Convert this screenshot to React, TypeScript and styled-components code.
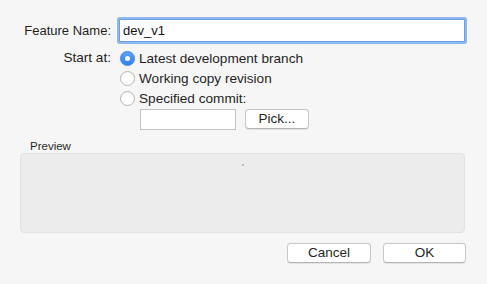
import React from 'react';
import styled, { createGlobalStyle } from 'styled-components';

const GlobalStyle = createGlobalStyle`
  html, body {
    margin: 0;
    padding: 0;
    background: #f6f6f6;
  }
  * {
    box-sizing: border-box;
  }
`;

const options = [
  { id: 'latest', label: 'Latest development branch', checked: true },
  { id: 'working', label: 'Working copy revision', checked: false },
  { id: 'commit', label: 'Specified commit:', checked: false },
];

export default function App() {
  return (
    <>
      <GlobalStyle />
      <Dialog>
        <NameRow>
          <Label>Feature Name:</Label>
          <NameInput defaultValue="dev_v1" />
        </NameRow>

        <StartRow>
          <Label $size={13.6}>Start at:</Label>
          <Options>
            {options.map((opt) => (
              <Option key={opt.id}>
                <Radio $checked={opt.checked} />
                <span>{opt.label}</span>
              </Option>
            ))}
          </Options>
        </StartRow>

        <CommitRow>
          <CommitInput />
          <Button $width={64} $height={20}>Pick...</Button>
        </CommitRow>

        <PreviewLabel>Preview</PreviewLabel>
        <PreviewBox>
          <Dot />
        </PreviewBox>

        <Footer>
          <Button $width={84} $height={20}>Cancel</Button>
          <Button $width={83} $height={20}>OK</Button>
        </Footer>
      </Dialog>
    </>
  );
}

const Dialog = styled.div`
  width: 487px;
  height: 284px;
  padding: 17px 21px 0 20px;
  background: #f6f6f6;
  font-family: "Liberation Sans", Arial, sans-serif;
  font-size: 13px;
  color: #1f1f1f;
  display: flex;
  flex-direction: column;
`;

const Label = styled.div<{ $size?: number }>`
  width: 91px;
  flex: none;
  text-align: right;
  line-height: 20px;
  font-size: ${(p) => p.$size ?? 13}px;
`;

const NameRow = styled.div`
  display: flex;
  align-items: center;
  height: 27px;
`;

const NameInput = styled.input`
  margin-left: 8px;
  width: 346px;
  height: 23px;
  border: 1px solid #6b9fe6;
  border-radius: 1px;
  box-shadow: 0 0 0 2px #8fb8f1;
  outline: none;
  padding: 0 3px;
  font-family: "Liberation Sans", Arial, sans-serif;
  font-size: 13px;
  color: #111;
  background: #fff;
`;

const StartRow = styled.div`
  display: flex;
  align-items: flex-start;
  margin-top: 4px;
`;

const Options = styled.div`
  margin-left: 9px;
  display: flex;
  flex-direction: column;
  font-size: 13.6px;
`;

const Option = styled.label`
  display: flex;
  align-items: center;
  gap: 4px;
  height: 20px;
`;

const Radio = styled.span<{ $checked: boolean }>`
  width: 15px;
  height: 15px;
  border-radius: 50%;
  flex: none;
  position: relative;
  background: ${(p) => (p.$checked ? 'linear-gradient(#5aa2fb, #2f7ff3)' : '#fff')};
  border: 1px solid ${(p) => (p.$checked ? '#3b82ee' : '#b5b5b5')};
  box-shadow: ${(p) => (p.$checked ? 'none' : 'inset 0 1px 1px rgba(0,0,0,0.05)')};

  &::after {
    content: '';
    display: ${(p) => (p.$checked ? 'block' : 'none')};
    position: absolute;
    left: 50%;
    top: 50%;
    width: 5px;
    height: 5px;
    margin: -2.5px 0 0 -2.5px;
    border-radius: 50%;
    background: #fff;
  }
`;

const CommitRow = styled.div`
  display: flex;
  align-items: flex-start;
  gap: 9px;
  margin-top: 1px;
  margin-left: 120px;
`;

const CommitInput = styled.input`
  width: 96px;
  height: 21px;
  border: 1px solid #c3c3c3;
  border-radius: 0;
  background: #fff;
  outline: none;
  padding: 0 3px;
`;

const Button = styled.button<{ $width: number; $height: number }>`
  width: ${(p) => p.$width}px;
  height: ${(p) => p.$height}px;
  padding: 0;
  border: 1px solid #c8c8c8;
  border-bottom-color: #b4b4b4;
  border-radius: 4px;
  background: #fff;
  box-shadow: 0 0.5px 1px rgba(0, 0, 0, 0.08);
  font-family: "Liberation Sans", Arial, sans-serif;
  font-size: 13.5px;
  color: #1f1f1f;
  line-height: 18px;
`;

const PreviewLabel = styled.div`
  margin-top: 9px;
  height: 14px;
  line-height: 14px;
  padding-left: 10px;
  font-size: 11.5px;
  color: #2a2a2a;
`;

const PreviewBox = styled.div`
  width: 445px;
  height: 80px;
  background: #ececec;
  border: 1px solid #e2e2e2;
  border-radius: 4px;
  display: flex;
  flex-direction: column;
  align-items: center;
  padding-top: 10px;
`;

const Dot = styled.span`
  width: 2px;
  height: 2px;
  background: #bdbdbd;
`;

const Footer = styled.div`
  display: flex;
  justify-content: flex-end;
  gap: 12px;
  margin-top: 10px;
`;
